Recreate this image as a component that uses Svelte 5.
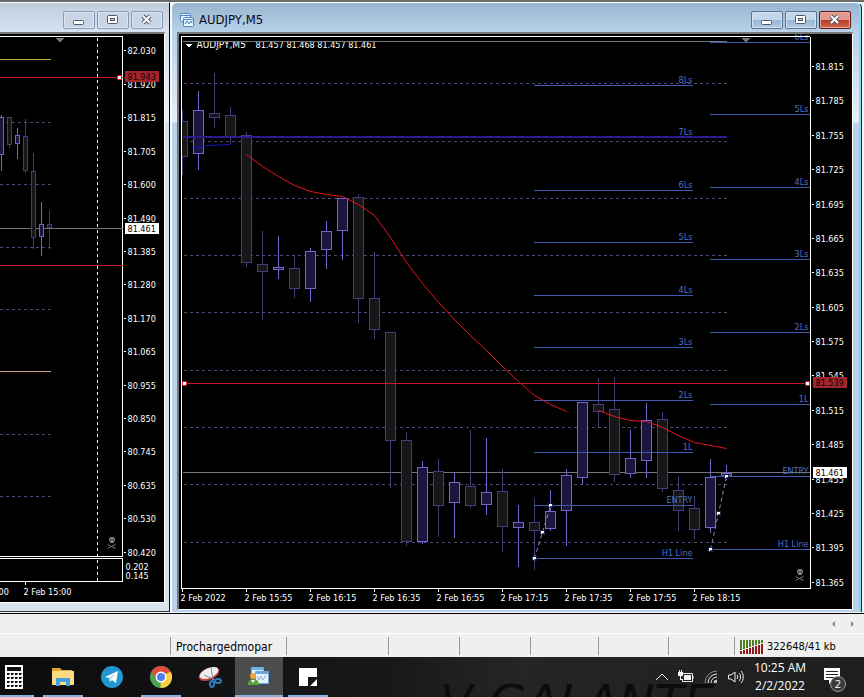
<script lang="ts">
  // center x, high, body top, body bottom, low, rising
  type Candle = [number, number, number, number, number, boolean];

  interface Level {
    y: number;
    label: string;
  }

  const h1Candles: Candle[] = [
    [1, 114, 117, 154, 170, true],
    [9, 116, 117, 144, 147, false],
    [17, 127, 135, 143, 158, true],
    [25, 118, 136, 170, 172, false],
    [33, 152, 171, 237, 248, false],
    [41, 201, 224, 236, 255, true],
    [49, 209, 224, 227, 248, false],
  ];

  const m5Candles: Candle[] = [
    [182, 109, 121, 156, 174, false],
    [198, 90, 110, 153, 169, true],
    [214, 72, 113, 117, 127, false],
    [230, 106, 115, 136, 143, false],
    [246, 131, 135, 262, 266, false],
    [262, 230, 264, 271, 319, false],
    [278, 235, 267, 269, 278, true],
    [294, 254, 268, 288, 297, false],
    [310, 247, 251, 288, 301, true],
    [326, 220, 231, 249, 268, true],
    [342, 197, 198, 230, 259, true],
    [358, 193, 197, 298, 322, false],
    [374, 251, 298, 329, 338, false],
    [390, 332, 332, 440, 487, false],
    [406, 431, 440, 541, 545, false],
    [422, 460, 467, 541, 543, true],
    [438, 458, 471, 505, 536, false],
    [454, 471, 482, 502, 537, true],
    [470, 429, 486, 505, 507, false],
    [486, 437, 492, 504, 514, true],
    [502, 468, 491, 526, 551, false],
    [518, 504, 522, 527, 566, true],
    [534, 497, 522, 530, 569, false],
    [550, 489, 511, 528, 530, true],
    [566, 468, 475, 510, 545, true],
    [582, 401, 402, 477, 484, true],
    [598, 377, 404, 411, 426, false],
    [614, 376, 409, 474, 481, false],
    [630, 429, 458, 473, 477, true],
    [646, 402, 420, 460, 477, true],
    [662, 411, 419, 488, 491, false],
    [678, 475, 490, 510, 530, false],
    [694, 495, 508, 529, 538, false],
    [710, 458, 477, 527, 532, true],
    [726, 464, 473, 475, 479, true],
  ];

  const h1Grid = [122, 184, 247, 309, 434, 496];
  const m5Grid = [83, 141, 198, 255, 312, 370, 427, 484, 542];

  const prevLevels: Level[] = [
    { y: 85, label: '8Ls' },
    { y: 137, label: '7Ls' },
    { y: 190, label: '6Ls' },
    { y: 242, label: '5Ls' },
    { y: 295, label: '4Ls' },
    { y: 347, label: '3Ls' },
    { y: 400, label: '2Ls' },
    { y: 452, label: '1L' },
    { y: 505, label: 'ENTRY' },
    { y: 558, label: 'H1 Line' },
  ];

  const nextLevels: Level[] = [
    { y: 42, label: '6Ls' },
    { y: 114, label: '5Ls' },
    { y: 187, label: '4Ls' },
    { y: 259, label: '3Ls' },
    { y: 332, label: '2Ls' },
    { y: 404, label: '1L' },
    { y: 476, label: 'ENTRY' },
    { y: 549, label: 'H1 Line' },
  ];

  const h1Prices = [
    82.03, 81.92, 81.815, 81.705, 81.6, 81.49, 81.385, 81.28, 81.17, 81.065, 80.955, 80.85, 80.745,
    80.635, 80.53, 80.42,
  ];
  const m5Prices = Array.from({ length: 16 }, (_, i) => 81.815 - i * 0.03);

  const h1Y = (p: number) => Math.round(50 + (82.03 - p) * 311.8);
  const m5Y = (p: number) => Math.round(66 + (81.815 - p) * 1146);

  const times = ['2022', '15:55', '16:15', '16:35', '16:55', '17:15', '17:35', '17:55', '18:15'];

  const maLong =
    '246,154 262,166 278,176 294,185 310,191 326,194 342,196 358,204 374,215 390,237 406,262 422,283 438,302 454,319 470,335 486,350 502,366 518,381 534,395 550,404 566,411';
  const maShort = '598,410 614,416 630,420 646,421 662,427 678,435 694,442 710,445 726,448';

  const zigzags = [
    [[534, 558], [542, 532], [550, 505]],
    [[710, 549], [718, 513], [726, 476]],
  ];

  const cells = [170, 116, 102, 71, 71, 68, 70];
</script>

{#snippet candles(list: Candle[], half: number)}
  {#each list as [x, high, top, bottom, low, up]}
    <g class={up ? 'candle up' : 'candle'}>
      <line x1={x} y1={high} x2={x} y2={low} />
      <rect x={x - half} y={top} width={half * 2} height={bottom - top} />
    </g>
  {/each}
{/snippet}

{#snippet levels(list: Level[], x1: number, x2: number, right: number)}
  {#each list as l}
    <line class="level" {x1} y1={l.y} {x2} y2={l.y} />
    <text class="level-label" x={right} y={l.y - 3} text-anchor="end">{l.label}</text>
  {/each}
{/snippet}

{#snippet handle(x: number, y: number)}
  <rect class="handle" x={x - 2} y={y - 2} width="4" height="4" />
{/snippet}

{#snippet skull(x: number, y: number)}
  <g class="skull" transform="translate({x} {y})">
    <path d="M2 0h4v1h1v3h-1v2h-4v-2h-1v-3h1z" />
    <path class="hole" d="M2 2h1v1h-1zM5 2h1v1h-1z" />
    <path class="bones" d="M0 8l8 4M8 8l-8 4" />
  </g>
{/snippet}

{#snippet controls()}
  <div class="controls">
    <button aria-label="Minimize">
      <svg width="14" height="12"><rect x="1.5" y="6.5" width="10" height="4" rx="1" class="glyph" /></svg>
    </button>
    <button aria-label="Restore">
      <svg width="14" height="12">
        <rect x="1.5" y="1.5" width="10" height="8" rx="1" class="glyph" />
        <rect x="4.5" y="4.5" width="4" height="2" class="glyph-hole" />
      </svg>
    </button>
    <button class="close" aria-label="Close">
      <svg width="14" height="12">
        <path class="x-edge" d="M3 2l7 7M10 2l-7 7" />
        <path class="x-fill" d="M3 2l7 7M10 2l-7 7" />
      </svg>
    </button>
  </div>
{/snippet}

<div class="screen">
  <main class="workspace">
    <section class="window inactive" aria-label="H1 chart">
      <header class="titlebar">{@render controls()}</header>
      <div class="chart">
        <svg class="plot" height="568">
          <g transform="translate(0.5 -33.5)">
            <path class="frame" d="M-1 36H122V556H-1M-1 558H122V581H-1M25 581v3" />
            {#each h1Grid as y}
              <line class="grid" x1="-1" y1={y} x2="50" y2={y} />
            {/each}
            <line class="bid" x1="-1" y1="228" x2="122" y2="228" />
            {@render candles(h1Candles, 2)}
            <line class="yellow" x1="-1" y1="59" x2="50" y2="59" />
            <line class="orange" x1="-1" y1="371" x2="50" y2="371" />
            <line class="red" x1="-1" y1="77" x2="122" y2="77" />
            <line class="red" x1="-1" y1="265" x2="122" y2="265" />
            <line class="day" x1="97" y1="37" x2="97" y2="581" />
            {@render handle(119, 77)}
            <path class="shift" d="M54 37h10l-5 5z" />
            {@render skull(107, 536)}
            <text class="tick" x="-2" y="594">00</text>
            <text class="tick" x="23" y="594">2 Feb 15:00</text>
          </g>
        </svg>
        <svg class="axis" height="568">
          <g transform="translate(0.5 -33.5)">
            {#each h1Prices as p}
              <line class="frame" x1="0" y1={h1Y(p)} x2="2" y2={h1Y(p)} />
              <text class="tick" x="4" y={h1Y(p) + 3}>{p.toFixed(3)}</text>
            {/each}
            <text class="tick" x="2" y="569">0.202</text>
            <text class="tick" x="2" y="578">0.145</text>
            <rect class="tag-red" x="2" y="71" width="33" height="10" />
            <text class="tick dark" x="4" y="79">81.943</text>
            <rect class="tag-white" x="2" y="223" width="33" height="10" />
            <text class="tick dark" x="4" y="231">81.461</text>
          </g>
        </svg>
      </div>
    </section>

    <section class="window active" aria-label="AUDJPY,M5">
      <header class="titlebar">
        <svg class="doc" width="14" height="14">
          <rect x="0.5" y="0.5" width="10" height="8" rx="1" />
          <path d="M1 2.5h9" />
          <rect x="3.5" y="4.5" width="10" height="9" rx="1" />
          <path d="M4 6.5h9M5 11l2-3 2 3 2-3 1 2" />
        </svg>
        <h1>AUDJPY,M5</h1>
        {@render controls()}
      </header>
      <div class="chart">
        <svg class="plot" height="575">
          <g transform="translate(-180.5 -33.5)">
            {#each m5Grid as y}
              <line class="grid" x1="183" y1={y} x2="726" y2={y} />
            {/each}
            <line class="bid" x1="182" y1="472" x2="2000" y2="472" />
            <text class="tick wide" x="196" y="47">AUDJPY,M5</text>
            <text class="tick" x="255" y="47">81.457 81.468 81.457 81.461</text>
            <path class="arrow" d="M184 43h8l-4 4z" />
            <rect class="strip" x="182" y="37" width="530" height="4" />
            <line class="bid" x1="182" y1="41" x2="726" y2="41" />
            {@render candles(m5Candles, 5)}
            {@render levels(prevLevels, 533, 692, 692)}
            {@render levels(nextLevels, 709, 2000, 808)}
            <rect class="support" x="183" y="136" width="543" height="1" />
            <polyline class="ma blue" points="192,148 198,147 206,145 230,144" />
            <polyline class="ma" points={maLong} />
            <polyline class="ma" points={maShort} />
            <line class="red" x1="182" y1="383" x2="2000" y2="383" />
            {@render handle(184, 383)}
            {@render handle(807, 383)}
            {#each zigzags as z}
              <polyline class="zigzag" points={z.join(' ')} />
              {#each z as [x, y]}
                <rect class="knot" x={x - 2} y={y - 2} width="4" height="4" />
                <rect class="knot-core" x={x - 1} y={y} width="2" height="1" />
              {/each}
            {/each}
            <path class="shift" d="M740 37h10l-5 5z" />
            {@render skull(795, 568)}
            <path class="frame" d="M2000 36H181V588H2000" />
            {#each times as t, i}
              <line class="frame" x1={182 + i * 64} y1="588" x2={182 + i * 64} y2="591" />
              <text class="tick" x={180 + i * 64} y="600">2 Feb {t}</text>
            {/each}
          </g>
        </svg>
        <svg class="axis" height="575">
          <g transform="translate(0.5 -33.5)">
            <line class="frame" x1="0" y1="36" x2="0" y2="588" />
            {#each m5Prices as p}
              <line class="frame" x1="1" y1={m5Y(p)} x2="3" y2={m5Y(p)} />
              <text class="tick" x="5" y={m5Y(p) + 3}>{p.toFixed(3)}</text>
            {/each}
            <rect class="tag-red" x="3" y="377" width="33" height="10" />
            <text class="tick dark" x="5" y="385">81.539</text>
            <rect class="tag-white" x="3" y="467" width="33" height="10" />
            <text class="tick dark" x="5" y="475">81.461</text>
          </g>
        </svg>
      </div>
    </section>
  </main>

  <div class="tabs">
    <button aria-label="Scroll tabs left"><svg width="5" height="8"><path d="M4 1v6L1 4z" /></svg></button>
    <button aria-label="Scroll tabs right"><svg width="5" height="8"><path d="M1 1v6l3-3z" /></svg></button>
  </div>

  <footer class="status">
    {#each cells as w, i}
      <div class="cell" style="width: {w}px">{i === 1 ? 'Prochargedmopar' : ''}</div>
    {/each}
    <div class="cell fill"></div>
    <div class="cell traffic">
      <svg width="24" height="14">
        {#each Array(8) as _, i}
          <rect class="down" x={i * 3} y="0" width="2" height={10 - i} />
          <rect class="sent" x={i * 3} y={11 - i} width="2" height={3 + i} />
        {/each}
      </svg>
      322648/41 kb
    </div>
  </footer>

  <nav class="taskbar" aria-label="Taskbar">
    <div class="wallpaper" aria-hidden="true"><span>V</span><span>GALANTE</span></div>
    <button class="app running" aria-label="Calculator">
      <svg width="18" height="24">
        <rect width="18" height="24" fill="#fff" />
        <rect x="2" y="2" width="14" height="4" fill="#111" />
        {#each [8, 12, 16, 20] as y}
          {#each [2, 6, 10, 14] as x}
            <path d="M{x} {y}h3l-1 2h-2z" fill="#111" />
          {/each}
        {/each}
      </svg>
    </button>
    <button class="app running" aria-label="File Explorer">
      <svg width="22" height="20">
        <path d="M0 1h8l2 2h10v3H0z" fill="#e0a93a" />
        <path d="M0 4h22v14H0z" fill="#fbdc82" />
        <path d="M4 19v-8h14v8h-4v-4H8v4z" fill="#3f9fe0" />
      </svg>
    </button>
    <button class="app" aria-label="Telegram">
      <svg width="22" height="22">
        <circle cx="11" cy="11" r="11" fill="#2397d2" />
        <path d="M4 11l13-6-2 12-4-3-2 2-1-4z" fill="#fff" />
        <path d="M8 12l7-5-5 6-1 3z" fill="#b4d8ec" />
      </svg>
    </button>
    <button class="app running" aria-label="Chrome">
      <svg width="22" height="22" viewBox="0 0 22 22">
        <circle cx="11" cy="11" r="11" fill="#4aa652" />
        <path d="M11 11L1.5 5.5A11 11 0 0 1 20.5 5.5z" fill="#dd4b3e" />
        <path d="M11 11L20.5 5.5A11 11 0 0 1 10.5 22z" fill="#fdce42" />
        <path d="M1.5 5.5L6 13.5L11 11L11 5.5z" fill="#dd4b3e" />
        <circle cx="11" cy="11" r="5.5" fill="#fff" />
        <circle cx="11" cy="11" r="4" fill="#4a80ee" />
      </svg>
    </button>
    <button class="app" aria-label="Snipping Tool">
      <svg width="26" height="24">
        <ellipse cx="12" cy="9" rx="11" ry="6" fill="#c73c45" transform="rotate(-24 12 9)" />
        <ellipse cx="12" cy="8" rx="10" ry="5" fill="#eee" transform="rotate(-24 12 8)" />
        <path d="M14 2l2 13M7 10l11 5" stroke="#8b939b" fill="none" />
        <ellipse cx="15" cy="19" rx="2" ry="3" fill="none" stroke="#2e7cb8" stroke-width="2" />
        <ellipse cx="21" cy="16" rx="3" ry="2" fill="none" stroke="#2e7cb8" stroke-width="2" />
      </svg>
    </button>
    <button class="app running current" aria-label="MetaTrader 4">
      <svg width="22" height="20">
        <rect x="3" y="0" width="13" height="11" rx="1" fill="#6db0e4" />
        <rect x="4" y="3" width="11" height="7" fill="#dceefa" />
        <rect x="7" y="4" width="14" height="13" rx="1" fill="#66a9df" />
        <rect x="8" y="7" width="12" height="9" fill="#e8f3fb" />
        <path d="M9 9l2 4 2-4 2 4 3-5" stroke="#8daed0" fill="none" />
        <path d="M0 18c0-4 2-6 5-6s6 2 6 6z" fill="#5aa336" />
        <circle cx="5" cy="9" r="3" fill="#f4a23c" />
        <path d="M3 13l2 3 2-3z" fill="#fff" />
      </svg>
    </button>
    <button class="app running" aria-label="Sticky Notes">
      <svg width="18" height="18">
        <path d="M0 0h18v9h-9v9H0zM18 11v7h-7z" fill="#fff" />
      </svg>
    </button>

    <div class="tray">
      <button aria-label="Show hidden icons">
        <svg width="14" height="16"><path d="M1 11l6-6 6 6" /></svg>
      </button>
      <button aria-label="Battery">
        <svg width="18" height="16">
          <path d="M6 4.5h9.5v8H5.5v-2M16 7v3" />
          <path class="solid" d="M7 6h7v5H7zM1 3h5v4H1zM2 1h1v2H2zM4 1h1v2H4zM3 7h1v3h2v1H3z" />
        </svg>
      </button>
      <button aria-label="Network">
        <svg width="16" height="16">
          <path class="dim" d="M2 14A12 12 0 0 1 14 2" />
          <path d="M5 14A9 9 0 0 1 14 5M8 14A6 6 0 0 1 14 8M11 14A3 3 0 0 1 14 11" />
          <circle class="solid" cx="13" cy="13" r="1" />
        </svg>
      </button>
      <button aria-label="Volume">
        <svg width="18" height="16">
          <path d="M1.5 6v4H4l4 3V3L4 6zM10 6c1 1 1 3 0 4M12 4c2 2 2 6 0 8M14 2c3 3 3 9 0 12" />
        </svg>
      </button>
    </div>
    <button class="clock"><time>10:25 AM</time><span>2/2/2022</span></button>
    <button class="notify" aria-label="Notifications">
      <svg width="16" height="18">
        <path d="M0 0h16v12H9l-4 4v-4H0z" fill="#fff" />
        <path d="M2 3.5h12M2 6.5h12M2 9.5h8" stroke="#222" />
      </svg>
      <span class="badge">2</span>
    </button>
  </nav>
</div>

<style>
  :global(body) {
    margin: 0;
    background: #1c1c1c;
  }

  .screen {
    font-family: Tahoma, 'DejaVu Sans Condensed', 'DejaVu Sans', sans-serif;
    overflow: hidden;
  }

  button {
    padding: 0;
    border: 0;
    background: none;
    font: inherit;
    color: inherit;
  }

  svg {
    display: block;
  }

  /* Chart windows */
  .workspace {
    display: flex;
    align-items: flex-start;
    gap: 1px;
    padding: 2px 2px 1px 0;
    border-bottom: 1px solid #000;
    background: linear-gradient(#6b6b6b 2px, #f4f4f4 2px);
  }

  .window {
    box-sizing: border-box;
    min-width: 0;
    border-top: 1px solid #fff;
  }

  .inactive {
    flex: 0 0 170px;
    padding-bottom: 8px;
    border-right: 1px solid #111;
    border-bottom: 1px solid #333;
    background: linear-gradient(#bfcddd, #d7e3f1 30px, #e9f1f6 119px, #d7e4f0 120px);
  }

  .active {
    flex: 1;
    padding: 0 6px 2px 5px;
    border-left: 1px solid #f8fbff;
    border-right: 1px solid #223;
    border-radius: 6px 6px 0 0;
    background: linear-gradient(#9ab5cf, #b9d2ec 30px, #e6eff8 119px, #b9d1ea 120px);
    box-shadow: inset -2px 0 #7fdcf2;
  }

  .titlebar {
    display: flex;
    align-items: center;
    height: 29px;
    padding: 4px 0 0;
    box-sizing: border-box;
  }

  .inactive .titlebar {
    padding-right: 6px;
  }

  .active .titlebar {
    padding-right: 4px;
  }

  h1 {
    margin: 0 0 0 5px;
    font-size: 13px;
    font-weight: 400;
    color: #0a0a14;
  }

  .doc {
    margin-left: 3px;
    fill: #e9f4fc;
    stroke: #4a86c4;
  }

  .controls {
    display: flex;
    gap: 2px;
    margin-left: auto;
  }

  .controls button {
    display: grid;
    place-items: center;
    box-sizing: border-box;
    width: 32px;
    height: 18px;
    border: 1px solid #8c9bb0;
    border-radius: 2px;
    background: #c8d5e4;
    box-shadow: inset 0 0 0 1px #dbe5f0;
  }

  .active .controls button {
    border-color: #5b7392;
    background: linear-gradient(#c3d6ea 50%, #98b4d2 50%, #b3cce4);
    box-shadow: inset 0 0 0 1px #d3e2f1;
  }

  .active .controls .close {
    border-color: #5a1a1c;
    background: linear-gradient(#e09a8e 50%, #b83c22 50%, #cf6a4c);
    box-shadow: inset 0 0 0 1px #e8aa9c;
  }

  .glyph {
    fill: #fff;
    stroke: #50586a;
  }

  .glyph-hole {
    fill: #c8d5e4;
    stroke: #50586a;
  }

  .x-edge {
    stroke: #50586a;
    stroke-width: 4;
  }

  .x-fill {
    stroke: #fff;
    stroke-width: 2;
  }

  .chart {
    display: flex;
    border-top: 2px solid #777;
    border-right: 1px solid #fff;
    border-bottom: 1px solid #fff;
    background: #000;
  }

  .active .chart {
    margin-right: 2px;
    padding-left: 2px;
    border-left: 2px solid #777;
  }

  .inactive .chart {
    margin-right: 4px;
  }

  .plot {
    flex: 1;
    width: 0;
    min-width: 0;
    overflow: hidden;
  }

  .axis {
    flex: 0 0 41px;
    width: 41px;
  }

  .active .axis {
    flex-basis: 42px;
  }

  .plot,
  .axis {
    shape-rendering: crispEdges;
  }

  /* Chart drawing */
  .frame {
    fill: none;
    stroke: #fff;
  }

  .grid {
    stroke: #4c4a72;
    stroke-dasharray: 3 3;
  }

  .bid {
    stroke: #72757a;
  }

  .day {
    stroke: #fff;
    stroke-dasharray: 3 3;
  }

  .yellow {
    stroke: #c8a440;
  }

  .orange {
    stroke: #d89a70;
  }

  .red {
    stroke: #c41c26;
  }

  .candle line,
  .candle rect {
    stroke: #453c7c;
  }

  .candle rect {
    fill: #17161a;
  }

  .up line,
  .up rect {
    stroke: #7466cc;
  }

  .up rect {
    fill: #1c1540;
  }

  .level {
    stroke: #3d5cb0;
  }

  .support {
    fill: #2a1c8c;
    stroke: #2a1c8c;
  }

  .ma {
    fill: none;
    stroke: #e8141c;
    shape-rendering: auto;
  }

  .ma.blue {
    stroke: #1414c8;
  }

  .zigzag {
    fill: none;
    stroke: #8c88b0;
    stroke-dasharray: 4 3;
    shape-rendering: auto;
  }

  .handle {
    fill: #fff;
    stroke: #c41c26;
  }

  .knot {
    fill: #fff;
    stroke: #22224a;
  }

  .knot-core {
    fill: #445;
  }

  .shift,
  .skull {
    fill: #777;
  }

  .bones {
    stroke: #777;
    shape-rendering: auto;
  }

  .hole,
  .strip {
    fill: #000;
  }

  .arrow {
    fill: #fff;
  }

  .tag-red {
    fill: #a3242b;
    stroke: #a3242b;
  }

  .tag-white {
    fill: #fff;
    stroke: #fff;
  }

  .tick {
    font-size: 9px;
    fill: #fff;
  }

  .wide {
    font-size: 10px;
  }

  .dark {
    fill: #0c0406;
  }

  .level-label {
    font-size: 9px;
    fill: #4c70cc;
  }

  /* Terminal bottom bars */
  .tabs {
    display: flex;
    justify-content: flex-end;
    gap: 14px;
    height: 19px;
    padding-right: 9px;
    border-bottom: 1px solid #fff;
    background: #efefef;
  }

  .tabs svg {
    fill: #8a8a8a;
  }

  .status {
    display: flex;
    height: 21px;
    padding-top: 2px;
    background: #efefef;
    font-size: 12px;
    line-height: 22px;
    color: #000;
  }

  .cell {
    box-sizing: border-box;
    padding-left: 6px;
    white-space: nowrap;
  }

  .cell + .cell {
    background: linear-gradient(#999, #999) 0 1px / 1px 18px no-repeat;
  }

  .fill {
    flex: 1;
  }

  .traffic {
    display: flex;
    align-items: center;
    gap: 3px;
    width: 130px;
    font-size: 11px;
  }

  .down {
    fill: #4f7f1e;
  }

  .sent {
    fill: #8e1a1a;
  }

  /* Taskbar */
  .taskbar {
    position: relative;
    display: flex;
    gap: 1px;
    height: 40px;
    overflow: hidden;
    background: linear-gradient(90deg, #0c0c0d, #17181a 45%, #242525 60%, #1e1e1f);
    color: #fff;
    font-family: 'Segoe UI', 'Open Sans', sans-serif;
  }

  .wallpaper {
    position: absolute;
    left: 440px;
    top: 21px;
    display: flex;
    gap: 16px;
    font: italic 48px/48px 'DejaVu Sans', sans-serif;
    color: #0c0c0c;
    white-space: nowrap;
  }

  .app {
    position: relative;
    display: grid;
    place-items: center;
    flex: 0 0 48px;
  }

  .app:nth-of-type(1) {
    margin-left: -10px;
  }

  .running::after {
    content: '';
    position: absolute;
    left: 4px;
    right: 4px;
    bottom: 0;
    height: 2px;
    background: #84b2dc;
  }

  .current {
    background: #4b4c4e;
  }

  .current::after {
    left: 0;
    right: 0;
  }

  .tray {
    position: relative;
    display: flex;
    align-items: center;
    gap: 8px;
    margin-left: auto;
  }

  .tray path {
    fill: none;
    stroke: #f0f0f0;
  }

  .tray .solid {
    fill: #f0f0f0;
    stroke: none;
  }

  .tray .dim {
    stroke: #8a8a8a;
  }

  .clock {
    position: relative;
    display: flex;
    flex-direction: column;
    justify-content: center;
    width: 68px;
    align-items: center;
    font-size: 12px;
    line-height: 18px;
  }

  .notify {
    position: relative;
    display: grid;
    place-items: center;
    width: 34px;
    margin-right: 15px;
  }

  .badge {
    position: absolute;
    right: 3px;
    bottom: 5px;
    width: 14px;
    height: 14px;
    border: 1px solid #9a9a9a;
    border-radius: 50%;
    background: #3a3a3a;
    font-size: 11px;
    line-height: 14px;
    text-align: center;
  }
</style>
